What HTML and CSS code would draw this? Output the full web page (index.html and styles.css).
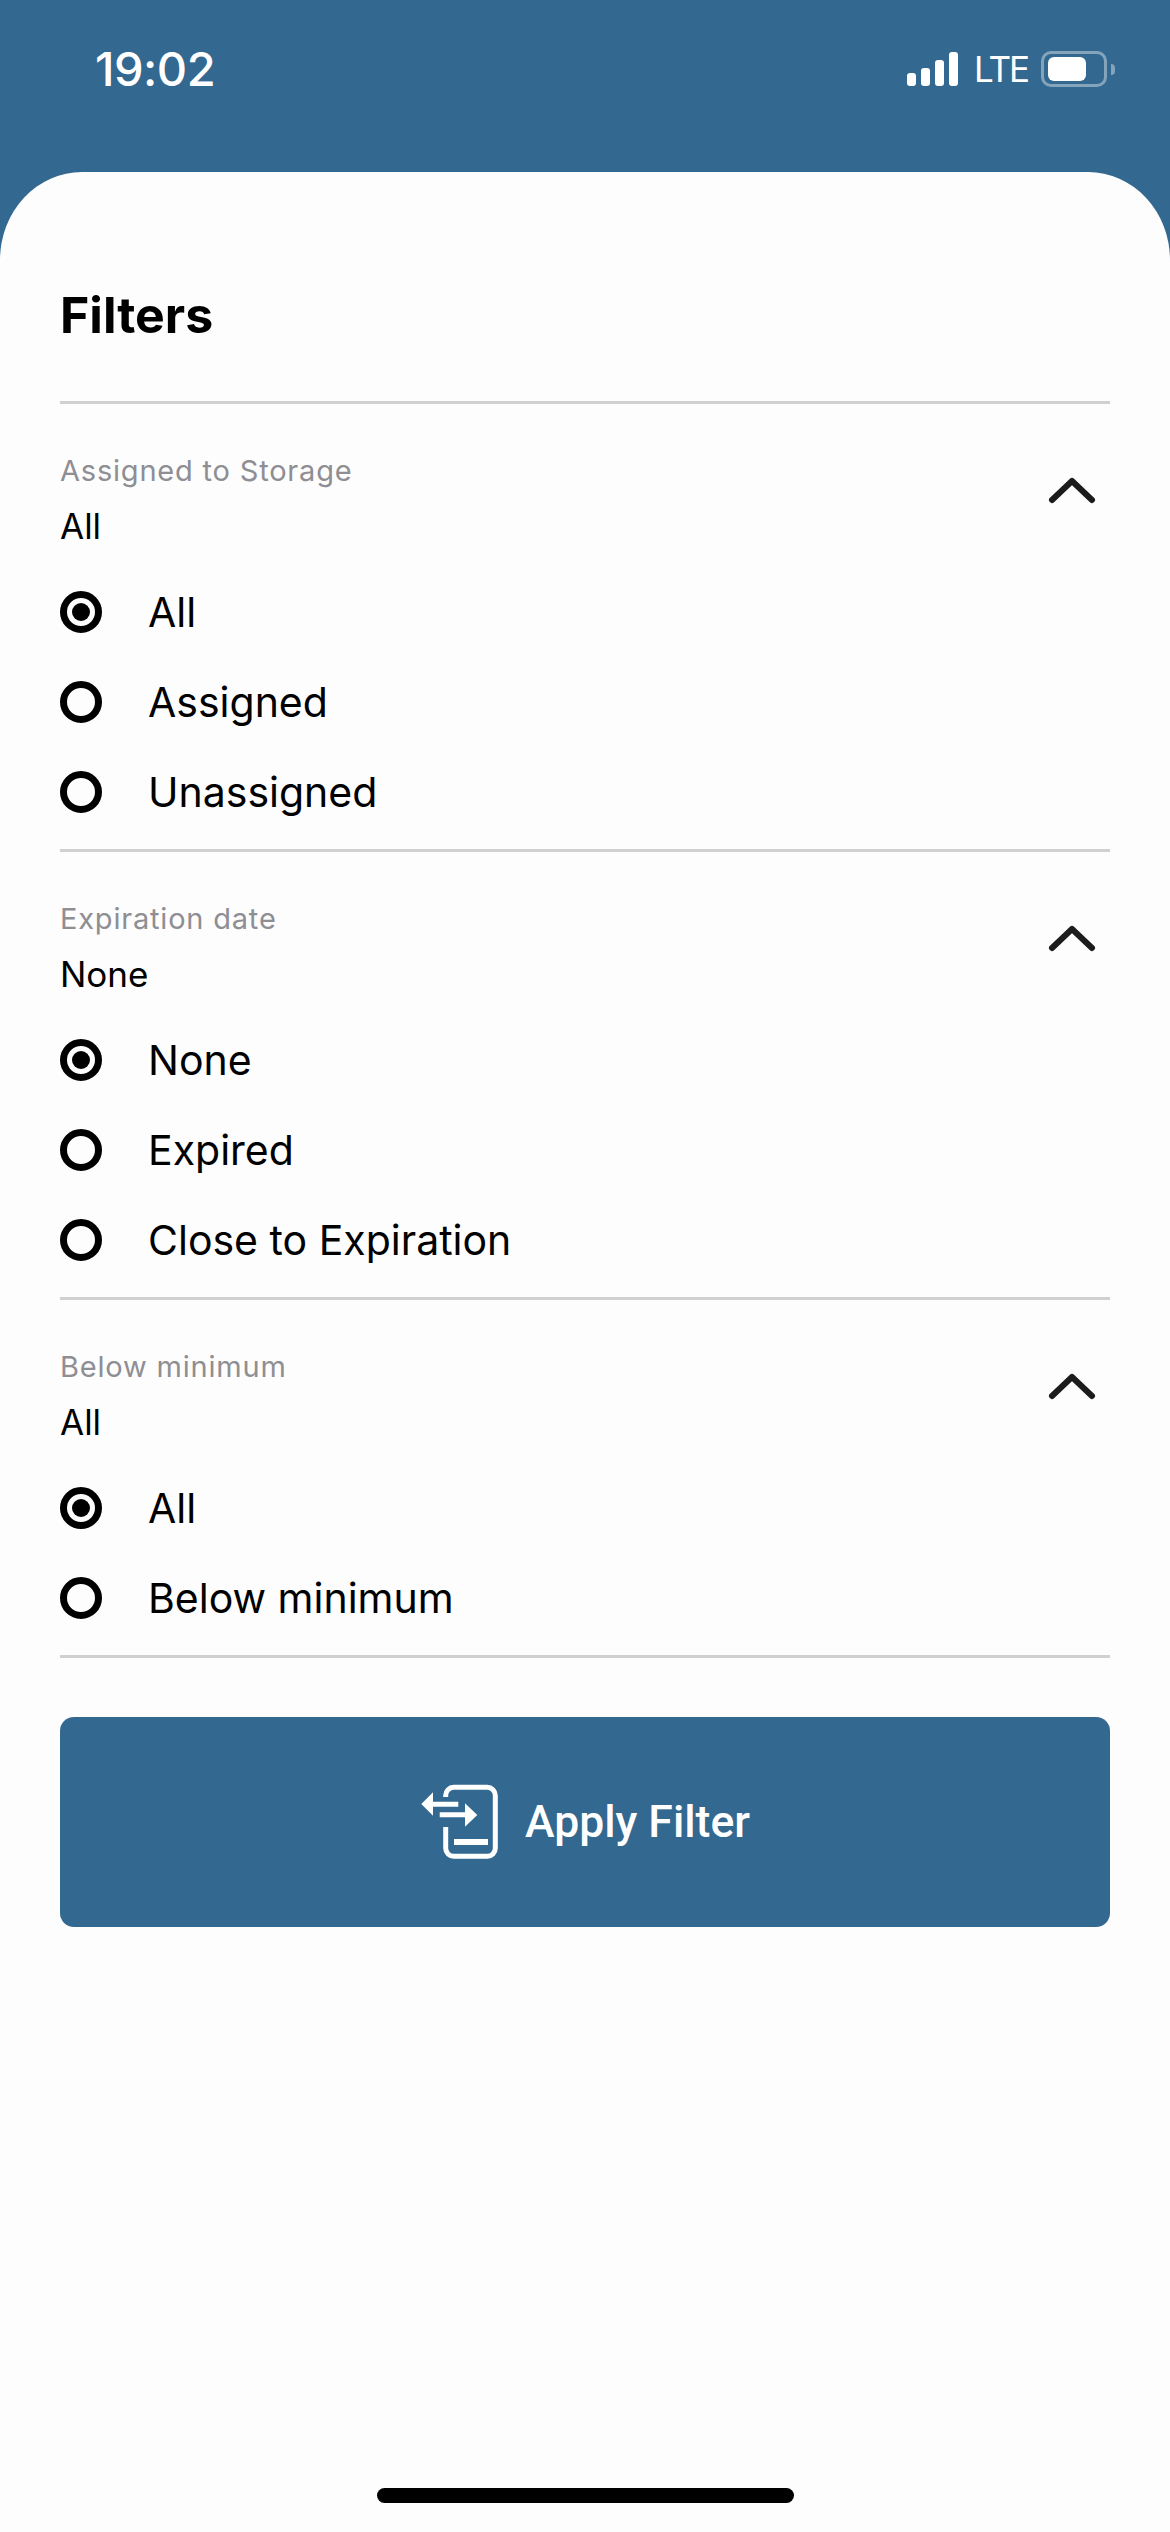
FILE: index.html
```html
<!DOCTYPE html>
<html lang="en">
<head>
    <meta charset="UTF-8">
    <meta name="viewport" content="width=device-width, initial-scale=1.0">
    <title>Filters</title>
    <link rel="stylesheet" href="styles.css">
</head>
<body>
    <header class="status-bar">
        <span class="clock">19:02</span>
        <div class="status-icons">
            <div class="signal">
                <span class="bar bar-1"></span>
                <span class="bar bar-2"></span>
                <span class="bar bar-3"></span>
                <span class="bar bar-4"></span>
            </div>
            <span class="network">LTE</span>
            <div class="battery"><span class="battery-level"></span></div>
            <span class="battery-cap"></span>
        </div>
    </header>

    <main class="sheet">
        <h1 class="sheet-title">Filters</h1>

        <section class="filter">
            <div class="filter-head">
                <div>
                    <p class="filter-label">Assigned to Storage</p>
                    <p class="filter-value">All</p>
                </div>
                <svg class="chevron" viewBox="0 0 48 28"><path d="M4 23 L24 4 L44 23"/></svg>
            </div>
            <ul class="options">
                <li class="option"><span class="radio radio-on"></span>All</li>
                <li class="option"><span class="radio"></span>Assigned</li>
                <li class="option"><span class="radio"></span>Unassigned</li>
            </ul>
        </section>

        <section class="filter">
            <div class="filter-head">
                <div>
                    <p class="filter-label">Expiration date</p>
                    <p class="filter-value">None</p>
                </div>
                <svg class="chevron" viewBox="0 0 48 28"><path d="M4 23 L24 4 L44 23"/></svg>
            </div>
            <ul class="options">
                <li class="option"><span class="radio radio-on"></span>None</li>
                <li class="option"><span class="radio"></span>Expired</li>
                <li class="option"><span class="radio"></span>Close to Expiration</li>
            </ul>
        </section>

        <section class="filter">
            <div class="filter-head">
                <div>
                    <p class="filter-label">Below minimum</p>
                    <p class="filter-value">All</p>
                </div>
                <svg class="chevron" viewBox="0 0 48 28"><path d="M4 23 L24 4 L44 23"/></svg>
            </div>
            <ul class="options">
                <li class="option"><span class="radio radio-on"></span>All</li>
                <li class="option"><span class="radio"></span>Below minimum</li>
            </ul>
        </section>

        <button class="apply-btn" type="button">
            <svg class="apply-icon" viewBox="0 0 80 76">
                <path class="apply-doc" d="M25.7 13 V11.3 a8 8 0 0 1 8-8 H67.3 a8 8 0 0 1 8 8 V64.3 a8 8 0 0 1-8 8 H33.7 a8 8 0 0 1-8-8 V43"/>
                <path class="apply-fill" d="M1.3 20 L13 8.3 V17.7 H38.3 V22.7 H13 V31.7 Z"/>
                <path class="apply-fill" d="M57.3 31 L45 19.3 V28.3 H19.7 V33.3 H45 V42.7 Z"/>
                <rect class="apply-fill" x="34" y="55" width="34" height="6"/>
            </svg>
            <span>Apply Filter</span>
        </button>

        <div class="home-indicator"></div>
    </main>
</body>
</html>
```

FILE: styles.css
```css
* {
    box-sizing: border-box;
}

body {
    margin: 0;
    width: 1170px;
    height: 2532px;
    overflow: hidden;
    display: flex;
    flex-direction: column;
    background-color: #336890;
    font-family: 'Inter', 'Liberation Sans', sans-serif;
    color: #000;
}

/* status bar */
.status-bar {
    height: 172px;
    flex: none;
    display: flex;
    justify-content: space-between;
    align-items: flex-start;
    padding: 44px 55px 0 95px;
    color: #fff;
}

.clock {
    font-size: 47px;
    line-height: 50px;
    font-weight: 500;
    letter-spacing: -0.5px;
}

.status-icons {
    display: flex;
    align-items: center;
    height: 50px;
}

.signal {
    display: flex;
    align-items: flex-end;
    gap: 5px;
    height: 34px;
    width: 51px;
}

.bar {
    width: 9px;
    background: #fff;
    border-radius: 3px;
}
.bar-1 { height: 13px; }
.bar-2 { height: 18px; }
.bar-3 { height: 26px; }
.bar-4 { height: 34px; }

.network {
    margin-left: 16px;
    width: 51px;
    font-size: 35px;
    line-height: 50px;
    letter-spacing: -2px;
}

.battery {
    margin-left: 16px;
    width: 66px;
    height: 36px;
    padding: 3px 4px;
    border: 3px solid rgba(255, 255, 255, 0.4);
    border-radius: 10px;
}

.battery-level {
    display: block;
    width: 38px;
    height: 24px;
    background: #fff;
    border-radius: 6px;
}

.battery-cap {
    margin-left: 4px;
    width: 4px;
    height: 11px;
    background: rgba(255, 255, 255, 0.4);
    border-radius: 0 4px 4px 0;
}

/* white sheet */
.sheet {
    flex: 1;
    display: flex;
    flex-direction: column;
    padding: 0 60px;
    background-color: #fdfdfd;
    border-radius: 82px 82px 0 0 / 88px 88px 0 0;
}

.sheet-title {
    height: 229px;
    margin: 0;
    padding-top: 113px;
    font-size: 50px;
    line-height: 60px;
    font-weight: 700;
}

.filter {
    border-top: 3px solid #d0d0d0;
    padding: 47px 0 12px;
}

.filter:last-of-type {
    border-bottom: 3px solid #d0d0d0;
}

.filter-head {
    display: flex;
    justify-content: space-between;
    align-items: flex-start;
}

.filter-label {
    margin: 0;
    font-size: 29px;
    line-height: 40px;
    letter-spacing: 0.8px;
    color: #8e8e93;
}

.filter-value {
    margin: 15px 0 0;
    font-size: 35px;
    line-height: 40px;
}

.chevron {
    width: 48px;
    height: 28px;
    margin: 26px 14px 0 0;
    fill: none;
    stroke: #1c1c1c;
    stroke-width: 6;
    stroke-linecap: round;
    stroke-linejoin: round;
}

.options {
    list-style: none;
    margin: 21px 0 0;
    padding: 0;
}

.option {
    height: 90px;
    display: flex;
    align-items: center;
    font-size: 41px;
}

.radio {
    width: 42px;
    height: 42px;
    margin-right: 46px;
    border: 7px solid #000;
    border-radius: 50%;
    display: flex;
    align-items: center;
    justify-content: center;
}

.radio-on::after {
    content: "";
    width: 18px;
    height: 18px;
    background: #000;
    border-radius: 50%;
}

/* apply button */
.apply-btn {
    height: 210px;
    margin-top: 59px;
    display: flex;
    align-items: center;
    justify-content: center;
    gap: 25px;
    background-color: #336890;
    border: 0;
    border-radius: 14px;
    color: #fff;
    font-family: 'Roboto', sans-serif;
    font-size: 44.5px;
    font-weight: 500;
}

.apply-icon {
    width: 80px;
    height: 76px;
}

.apply-doc {
    fill: none;
    stroke: #fff;
    stroke-width: 5;
}

.apply-fill {
    fill: #fff;
}

.home-indicator {
    width: 417px;
    height: 15px;
    margin: auto auto 29px;
    background: #000;
    border-radius: 8px;
}
```
